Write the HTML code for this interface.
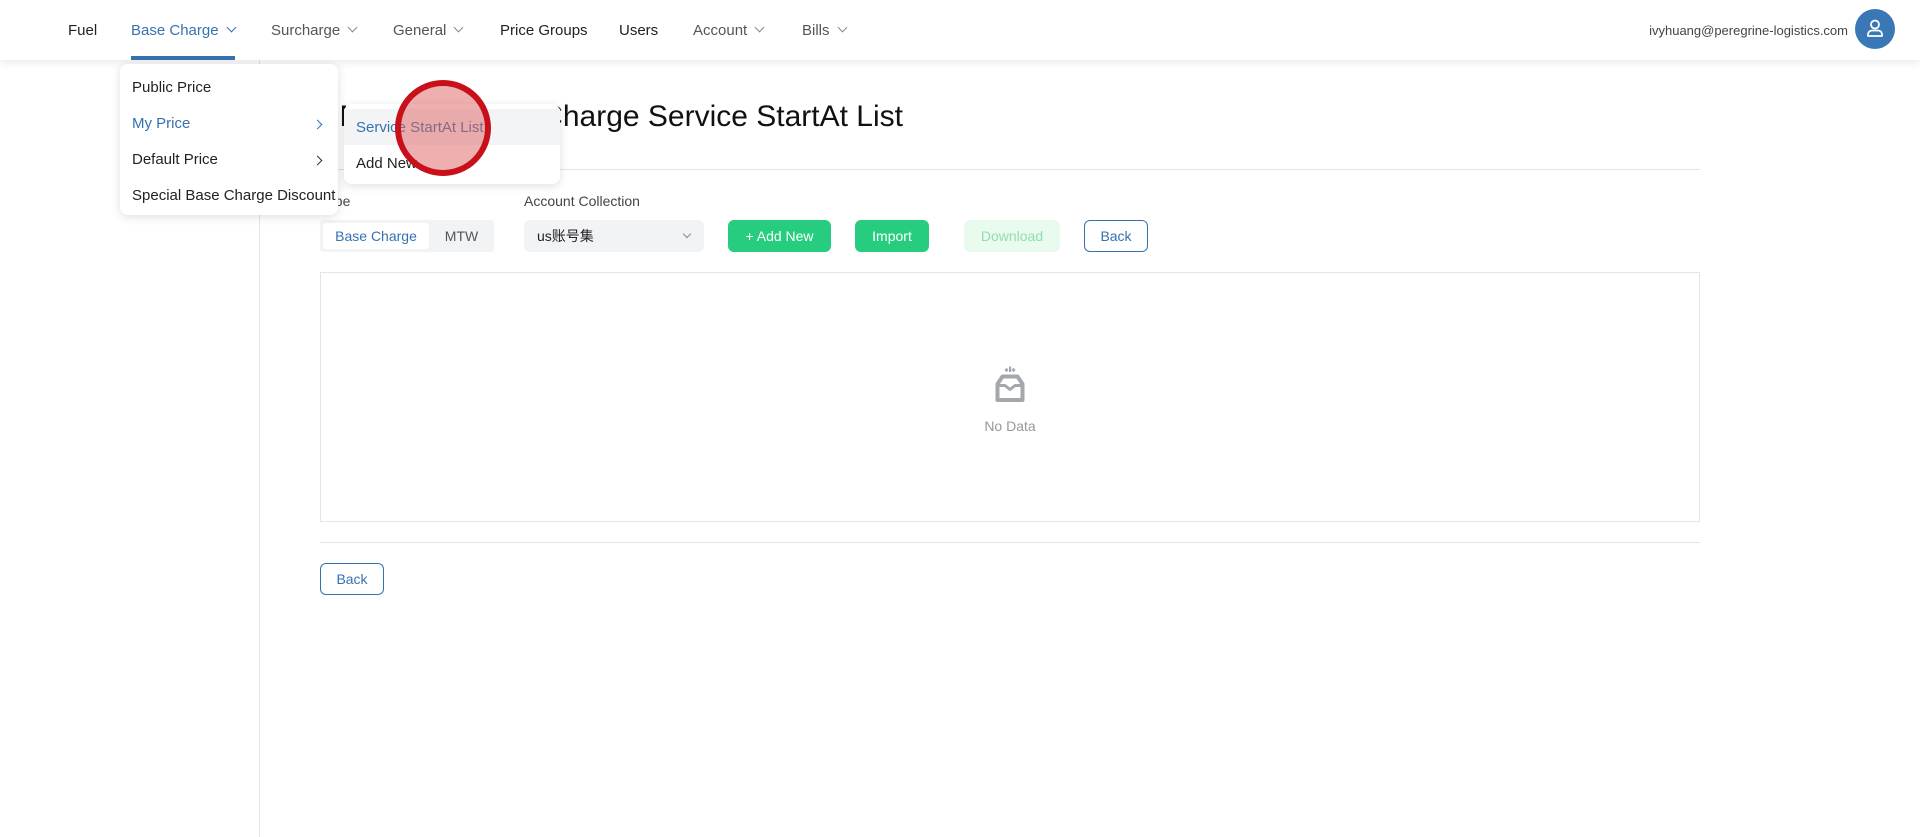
<!DOCTYPE html>
<html><head><meta charset="utf-8"><style>
*{box-sizing:border-box;margin:0;padding:0}
body{width:1920px;height:837px;overflow:hidden;background:#fff;font-family:"Liberation Sans","Noto Sans CJK SC",sans-serif;color:#222;position:relative}
.abs{position:absolute}
.nav{position:absolute;left:0;top:0;width:1920px;height:60px;background:#fff;box-shadow:0 3px 8px rgba(0,0,0,0.08);z-index:2}
.ni{position:absolute;top:21px;font-size:15px;line-height:20px;white-space:nowrap;color:#555}
.chev{display:inline-block;width:7px;height:7px;border-right:1.3px solid #888;border-bottom:1.3px solid #888;transform:rotate(45deg);margin-left:9px;position:relative;top:-4px}
.side{position:absolute;left:259px;top:60px;width:1px;height:777px;background:#e5e5e5}
.btn{position:absolute;top:220px;height:32px;border-radius:6px;font-size:14px;line-height:32px;text-align:center}
.menu{position:absolute;background:#fff;border-radius:8px;box-shadow:0 2px 10px rgba(0,0,0,0.13);z-index:3}
.mi{position:absolute;left:12px;font-size:15px;line-height:20px;white-space:nowrap;color:#222}
.rc{position:absolute;width:7px;height:7px;border-right:1.4px solid #333;border-top:1.4px solid #333;transform:rotate(45deg)}
</style></head><body>
<div class="nav">
  <div class="ni" style="left:68px;color:#222">Fuel</div>
  <div class="ni" style="left:131px;color:#3572b0">Base Charge<span class="chev" style="border-color:#3572b0"></span></div>
  <div class="abs" style="left:131px;top:56px;width:104px;height:4px;background:#3572b0"></div>
  <div class="ni" style="left:271px">Surcharge<span class="chev"></span></div>
  <div class="ni" style="left:393px">General<span class="chev"></span></div>
  <div class="ni" style="left:500px;color:#222">Price Groups</div>
  <div class="ni" style="left:619px;color:#222">Users</div>
  <div class="ni" style="left:693px">Account<span class="chev"></span></div>
  <div class="ni" style="left:802px">Bills<span class="chev"></span></div>
  <div class="abs" style="right:72px;top:22px;font-size:13px;line-height:18px;color:#444">ivyhuang@peregrine-logistics.com</div>
  <div class="abs" style="left:1855px;top:9px;width:40px;height:40px;border-radius:50%;background:#3a78b5">
    <svg width="40" height="40" viewBox="0 0 40 40"><circle cx="20" cy="15.5" r="4" fill="none" stroke="#fff" stroke-width="1.8"/><path d="M13 27v-1.5a4 4 0 0 1 4-4h6a4 4 0 0 1 4 4V27z" fill="none" stroke="#fff" stroke-width="1.8" stroke-linejoin="round"/></svg>
  </div>
</div>
<div class="side"></div>

<div class="abs" style="right:1017px;top:99px;font-size:30px;line-height:36px;white-space:nowrap;color:#111">My Price Base Charge Service StartAt List</div>
<div class="abs" style="left:320px;top:169px;width:1380px;height:1px;background:#e5e5e5"></div>

<div class="abs" style="left:320px;top:192px;font-size:14px;line-height:18px;color:#444">Type</div>
<div class="abs" style="left:524px;top:192px;font-size:14px;line-height:18px;color:#444">Account Collection</div>

<div class="abs" style="left:320px;top:220px;width:174px;height:32px;background:#f2f3f5;border-radius:3px"></div>
<div class="abs" style="left:323px;top:223px;width:106px;height:26px;background:#fff;border-radius:3px;font-size:14px;line-height:26px;text-align:center;color:#3572b0">Base Charge</div>
<div class="abs" style="left:429px;top:223px;width:65px;height:26px;font-size:14px;line-height:26px;text-align:center;color:#555">MTW</div>

<div class="abs" style="left:524px;top:220px;width:180px;height:32px;background:#f2f3f5;border-radius:6px;font-size:14px;line-height:32px;padding-left:13px;color:#222">us账号集<span class="abs" style="right:14px;top:11px;width:6px;height:6px;border-right:1.2px solid #888;border-bottom:1.2px solid #888;transform:rotate(45deg)"></span></div>

<div class="btn" style="left:728px;width:103px;background:#26cd7f;color:#fff">+ Add New</div>
<div class="btn" style="left:855px;width:74px;background:#26cd7f;color:#fff">Import</div>
<div class="btn" style="left:964px;width:96px;background:#e8fbee;color:#95dcb0">Download</div>
<div class="btn" style="left:1084px;width:64px;border:1px solid #3572b0;color:#3572b0;line-height:30px">Back</div>

<div class="abs" style="left:320px;top:272px;width:1380px;height:250px;border:1px solid #e5e5e5"></div>
<svg class="abs" style="left:988px;top:363px" width="44" height="44" viewBox="0 0 44 44">
  <path d="M16.5 7l2-2.2 2 2.2-2 2.2z M21 3.5h2.2v5.5H21z M23.5 7l2-2.2 2 2.2-2 2.2z" fill="#a5a7af"/>
  <path d="M9.5 21 L14.5 13.5 H29.5 L34.5 21 V37 H9.5 Z" fill="none" stroke="#a5a7af" stroke-width="4" stroke-linejoin="round"/>
  <path d="M9.5 22.5 H17 L22 26.5 L27 22.5 H34.5" fill="none" stroke="#a5a7af" stroke-width="3" stroke-linejoin="round"/>
</svg>
<div class="abs" style="left:960px;top:417px;width:100px;text-align:center;font-size:14px;line-height:18px;color:#999">No Data</div>

<div class="abs" style="left:320px;top:542px;width:1380px;height:1px;background:#e5e5e5"></div>
<div class="abs" style="left:320px;top:563px;width:64px;height:32px;border:1px solid #3572b0;border-radius:6px;font-size:14px;line-height:30px;text-align:center;color:#3572b0">Back</div>

<div class="menu" style="left:120px;top:64px;width:218px;height:151px">
  <div class="mi" style="top:14px">Public Price</div>
  <div class="mi" style="top:50px;color:#3572b0">My Price</div>
  <div class="rc" style="left:194px;top:57px;border-color:#3572b0"></div>
  <div class="mi" style="top:86px">Default Price</div>
  <div class="rc" style="left:194px;top:93px"></div>
  <div class="mi" style="top:122px">Special Base Charge Discount</div>
</div>
<div class="menu" style="left:344px;top:104px;width:216px;height:80px">
  <div class="abs" style="left:0;top:5px;width:216px;height:36px;background:#f3f4f6"></div>
  <div class="mi" style="top:14px;color:#3572b0">Service StartAt List</div>
  <div class="mi" style="top:50px">Add New</div>
</div>
<div class="abs" style="left:395px;top:80px;width:96px;height:96px;border-radius:50%;border:6px solid #c8101a;background:rgba(222,95,95,0.5);z-index:4"></div>
</body></html>
